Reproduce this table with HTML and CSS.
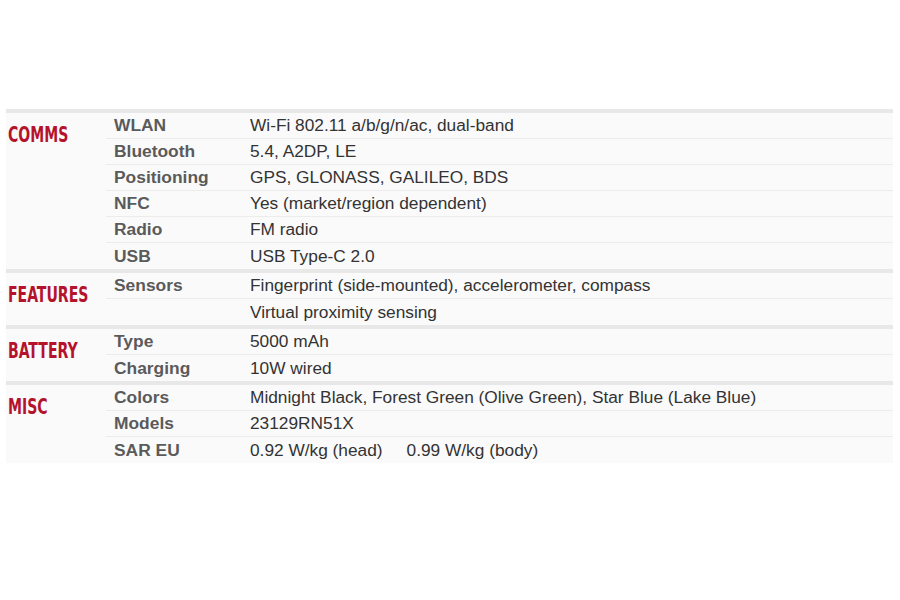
FILE: index.html
```html
<!DOCTYPE html>
<html>
<head>
<meta charset="utf-8">
<link rel="stylesheet" href="styles.css">
</head>
<body>
<div class="specs">
  <section class="sec">
    <div class="head"><span class="htxt">COMMS</span></div>
    <div class="rows">
      <div class="row"><div class="lbl">WLAN</div><div class="val">Wi-Fi 802.11 a/b/g/n/ac, dual-band</div></div>
      <div class="row"><div class="lbl">Bluetooth</div><div class="val">5.4, A2DP, LE</div></div>
      <div class="row"><div class="lbl">Positioning</div><div class="val">GPS, GLONASS, GALILEO, BDS</div></div>
      <div class="row"><div class="lbl">NFC</div><div class="val">Yes (market/region dependent)</div></div>
      <div class="row"><div class="lbl">Radio</div><div class="val">FM radio</div></div>
      <div class="row"><div class="lbl">USB</div><div class="val">USB Type-C 2.0</div></div>
    </div>
  </section>
  <section class="sec">
    <div class="head"><span class="htxt">FEATURES</span></div>
    <div class="rows">
      <div class="row"><div class="lbl">Sensors</div><div class="val">Fingerprint (side-mounted), accelerometer, compass</div></div>
      <div class="row"><div class="lbl"></div><div class="val">Virtual proximity sensing</div></div>
    </div>
  </section>
  <section class="sec">
    <div class="head"><span class="htxt">BATTERY</span></div>
    <div class="rows">
      <div class="row"><div class="lbl">Type</div><div class="val">5000 mAh</div></div>
      <div class="row"><div class="lbl">Charging</div><div class="val">10W wired</div></div>
    </div>
  </section>
  <section class="sec">
    <div class="head"><span class="htxt">MISC</span></div>
    <div class="rows">
      <div class="row"><div class="lbl">Colors</div><div class="val">Midnight Black, Forest Green (Olive Green), Star Blue (Lake Blue)</div></div>
      <div class="row"><div class="lbl">Models</div><div class="val">23129RN51X</div></div>
      <div class="row"><div class="lbl">SAR EU</div><div class="val">0.92 W/kg (head) &nbsp;&nbsp;&nbsp; 0.99 W/kg (body)</div></div>
    </div>
  </section>
</div>
</body>
</html>
```
FILE: styles.css
```css
html, body {
  margin: 0;
  padding: 0;
  background: #ffffff;
}
body {
  width: 900px;
  height: 600px;
  padding-top: 109px;
  box-sizing: border-box;
  font-family: "Liberation Sans", Arial, sans-serif;
}
.specs {
  margin-left: 6px;
  width: 887px;
  background: #fafafa;
}
.sec {
  display: flex;
  border-top: 4px solid #e8e8e8;
}
.head {
  width: 100px;
  flex: none;
  padding-left: 2px;
  padding-top: 11px;
  box-sizing: border-box;
}
.htxt {
  display: inline-block;
  font-family: "DejaVu Sans Condensed", "DejaVu Sans", sans-serif;
  font-weight: bold;
  font-size: 22px;
  line-height: 22px;
  color: #b5122c;
  transform: scaleX(0.71);
  transform-origin: left top;
}
.rows {
  flex: 1;
  display: flex;
  flex-direction: column;
}
.row {
  display: flex;
  height: 26px;
  box-sizing: border-box;
  border-bottom: 1px solid #ececec;
  align-items: center;
}
.row:last-child {
  border-bottom: none;
}
.lbl {
  width: 144px;
  flex: none;
  padding-left: 8px;
  box-sizing: border-box;
  font-weight: bold;
  font-size: 17.4px;
  color: #5a5a5a;
}
.val {
  font-size: 17.3px;
  color: #333333;
}
```
